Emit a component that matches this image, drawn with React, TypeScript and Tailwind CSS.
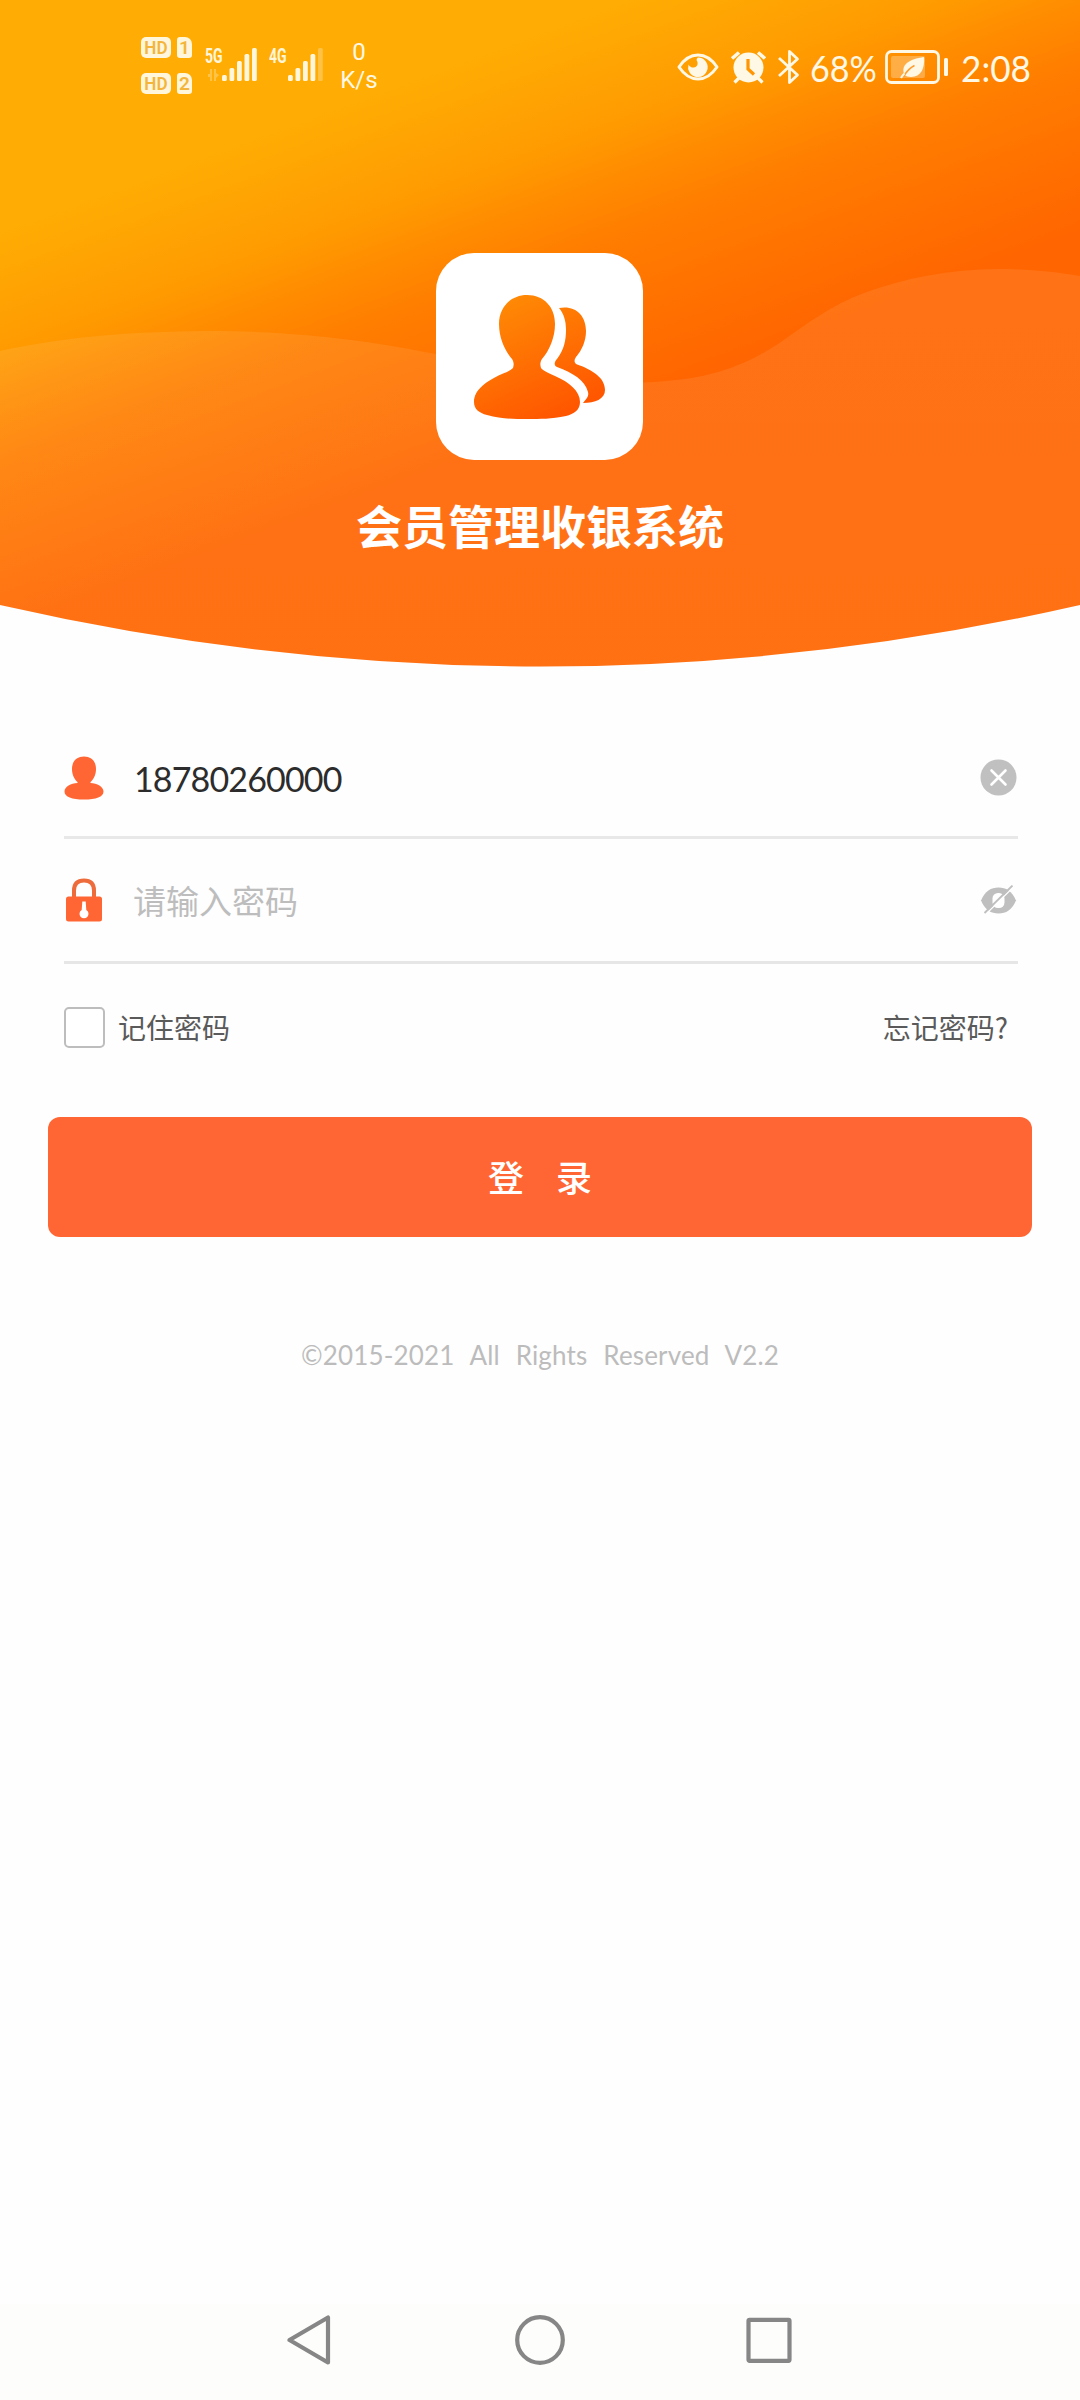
import { useState } from "react"
import { clsx } from "clsx"

const fontStack = "font-['Noto_Sans_CJK_SC','Noto_Sans',sans-serif]"
const latinStack = "font-['Lato','Noto_Sans_CJK_SC',sans-serif]"

function HeaderBackground() {
  return (
    <svg className="absolute inset-0" width="1080" height="668" viewBox="0 0 1080 668" aria-hidden="true">
      <defs>
        <linearGradient id="sky" gradientUnits="userSpaceOnUse" x1="74" y1="198" x2="206" y2="555">
          <stop offset="0" stopColor="#ffad04" />
          <stop offset="0.31" stopColor="#ff9b01" />
          <stop offset="0.44" stopColor="#ff8c00" />
          <stop offset="0.59" stopColor="#ff7d00" />
          <stop offset="1" stopColor="#ff6500" />
        </linearGradient>
        <linearGradient id="wave" x1="0" y1="0" x2="0" y2="1">
          <stop offset="0" stopColor="#fff" stopOpacity="0.085" />
          <stop offset="1" stopColor="#fff" stopOpacity="0.075" />
        </linearGradient>
        <clipPath id="bowl">
          <path d="M0 0H1080V605Q540 728 0 605Z" />
        </clipPath>
      </defs>
      <g clipPath="url(#bowl)">
        <rect width="1080" height="668" fill="url(#sky)" />
        <path
          d="M0 351C70 336 130 332 207 331C300 331 370 341 436 354C510 370 590 386 654 382C700 379 735 372 778 344C810 322 830 306 864 293C905 278 950 269 999 269C1030 269 1055 272 1080 276V668H0Z"
          fill="url(#wave)"
        />
      </g>
    </svg>
  )
}

function HdBadge({ sim }: { sim: string }) {
  return (
    <div className="flex h-[21px] gap-[6px] font-['Roboto',sans-serif] text-[19px] leading-[22px] font-semibold text-[#f3b53c]">
      <span className="flex w-[30px] justify-center rounded-[5px] bg-[#fff6dc]">
        <span className="scale-x-[0.9]">HD</span>
      </span>
      <span className="w-[15px] rounded-[3px] rounded-tr-[7px] bg-[#fff6dc] text-center">{sim}</span>
    </div>
  )
}

const barTops = [27, 20, 13, 6, 0]

function Signal({ label, faded }: { label: string; faded?: boolean }) {
  return (
    <div className="flex h-[33px] items-start text-[#fff6dc]">
      <span className="w-[17px] origin-left scale-x-[0.7] font-['Roboto',sans-serif] text-[20px] leading-[16px] font-bold">
        {label}
      </span>
      <svg className={faded ? "ml-[2px]" : "ml-0"} width="36" height="33" viewBox="0 0 36 33" fill="currentColor">
        {barTops.map((top, i) => (
          <rect
            key={top}
            x={i * 7.5}
            y={top}
            width="4.8"
            height={33 - top}
            rx="1.6"
            opacity={faded && i === 4 ? 0.3 : 1}
          />
        ))}
      </svg>
    </div>
  )
}

function EyeIcon() {
  return (
    <svg width="42" height="28" viewBox="0 0 42 28" fill="none">
      <path d="M2 14C8 5 14 2 21 2s13 3 19 12c-6 9-12 12-19 12S8 23 2 14Z" stroke="currentColor" strokeWidth="3" strokeLinejoin="round" />
      <path d="M21 4.500a9.800 9.800 0 1 1-9.500 7c1.200 2.300 3.200 3.300 5.300 3.100 3.400-.3 4.700-3.800 3.200-6.500-.7-1.200-.4-2.600 1-3.600Z" fill="currentColor" />
    </svg>
  )
}

function AlarmIcon() {
  return (
    <svg width="37" height="34" viewBox="0 0 37 34" fill="none">
      <circle cx="18.500" cy="17.500" r="15" fill="currentColor" />
      <path d="M2 8.500 9 2.500M35 8.500 28 2.500" stroke="currentColor" strokeWidth="3.600" />
      <path d="m9 28-4.500 4.500M28 28l4.500 4.500" stroke="currentColor" strokeWidth="3.200" />
      <path d="M18 9v10l6 5.500" stroke="#ff9503" strokeWidth="3.200" />
    </svg>
  )
}

function BluetoothIcon() {
  return (
    <svg width="24" height="36" viewBox="0 0 24 36" fill="none">
      <path d="M2 9 20.500 26 12.500 33.500V2.500L20.500 10 2 27" stroke="currentColor" strokeWidth="2.800" strokeLinejoin="round" />
    </svg>
  )
}

function BatteryIcon() {
  return (
    <svg width="64" height="34" viewBox="0 0 64 34" fill="none">
      <rect x="1.500" y="1.500" width="52" height="31" rx="5" stroke="currentColor" strokeWidth="2.800" />
      <rect x="6" y="6" width="34" height="22" rx="2" fill="currentColor" opacity="0.3" />
      <path d="M39 7c1 11-3 20-13 20-3 0-5-.8-6.500-2C15 15 24 9 39 7Z" fill="currentColor" />
      <path d="M18.500 26.500c3-5 6-8.500 11-11" stroke="#ff9d30" strokeWidth="1.600" />
      <path d="M16 28c1-2 2-3.200 3.500-4.500" stroke="currentColor" strokeWidth="2" />
      <rect x="59" y="8" width="4" height="18" rx="1.500" fill="currentColor" />
    </svg>
  )
}

function StatusBar() {
  return (
    <div className="relative flex h-[132px] justify-between pt-[37px] pr-[48px] pl-[141px] text-[#fff8e4]">
      <div className="flex items-start">
        <div className="flex flex-col gap-[15px]">
          <HdBadge sim="1" />
          <HdBadge sim="2" />
        </div>
        <div className="mt-[11px] ml-[13px] flex gap-[11px]">
          <div className="relative">
            <Signal label="5G" />
            <svg className="absolute bottom-0 left-[3px] opacity-30" width="11" height="12" viewBox="0 0 11 12" fill="currentColor">
              <path d="M0 5h2V0h2v12H2V8H0ZM6 0h2v4l3 2-3 3v3H6Z" />
            </svg>
          </div>
          <Signal label="4G" faded />
        </div>
        <div className="mt-[1px] ml-[13px] w-[44px] text-center font-['Roboto',sans-serif] text-[24px] leading-[28px]">
          <p>0</p>
          <p>K/s</p>
        </div>
      </div>
      <div className="flex h-[60px] items-center">
        <EyeIcon />
        <div className="ml-[11px] flex">
          <AlarmIcon />
        </div>
        <div className="ml-[10px] flex">
          <BluetoothIcon />
        </div>
        <span className={clsx("ml-[9px] w-[75px] origin-left scale-x-[0.92] text-[37px] leading-none whitespace-nowrap", latinStack)}>
          68%
        </span>
        <BatteryIcon />
        <span className={clsx("ml-[12px] w-[71px] origin-left scale-x-[0.95] text-[37px] leading-none", latinStack)}>2:08</span>
      </div>
    </div>
  )
}

function Logo() {
  return (
    <div className="relative mt-[121px] ml-[436px] h-[207px] w-[207px] rounded-[38px] bg-white">
      <svg width="207" height="207" viewBox="0 0 207 207" fill="none">
        <defs>
          <linearGradient id="members" gradientUnits="userSpaceOnUse" x1="70" y1="45" x2="125" y2="165">
            <stop offset="0" stopColor="#ff8a05" />
            <stop offset="1" stopColor="#ff5500" />
          </linearGradient>
        </defs>
        <g fill="url(#members)">
          <path d="M91 42C108 42 119 54 119 71C119 85 113 98 106 106C104 109 104 112 105 115C107 118 113 120 119 123C133 129 144 138 144 149C144 157 138 161 130 163C115 166 105 166 91 166C77 166 65 166 51 162C43 160 38 156 38 149C38 137 50 128 66 121C71 119 75 117 77 115C78 112 78 109 76 106C69 98 63 85 63 71C63 54 75 42 91 42Z" />
          <path d="M123 55C139 52 150 62 150 78C150 88 146 97 140 104C138 107 138 109 140 111C157 117 169 125 169 137C169 146 159 150 147 150C151 145 153 143 152 139C149 127 137 120 121 114C117 112 119 108 121 106C128 97 130 87 130 77C130 68 128 61 123 55Z" />
        </g>
      </svg>
    </div>
  )
}

function UserIcon() {
  return (
    <svg className="mt-[3px]" width="40" height="44" viewBox="0 0 40 44" fill="#ff6633">
      <path d="M20 0.500C27.500 0.500 32 5.500 32 13C32 19 29.500 23.500 26.500 26V27C33 27.500 39.500 30.500 39.500 35.500C39.500 41 32 43.500 20 43.500S0.500 41 0.500 35.500C0.500 30.500 7 27.500 13.500 27V26C10.500 23.500 8 19 8 13C8 5.500 12.500 0.500 20 0.500Z" />
    </svg>
  )
}

function LockIcon() {
  return (
    <svg width="40" height="44" viewBox="0 0 40 44" fill="none">
      <path d="M10 20V12.500C10 6 13.500 2.500 20 2.500S30 6 30 12.500V20" stroke="#ee6c3c" strokeWidth="4" />
      <rect x="2" y="18.500" width="36" height="25" rx="2.500" fill="#ff6633" />
      <path d="M18.300 23.500h3.400l.6 8.500a4.500 4.500 0 1 1-4.600 0Z" fill="#fff" />
    </svg>
  )
}

function ClearIcon() {
  return (
    <svg width="37" height="37" viewBox="0 0 37 37" fill="none">
      <circle cx="18.500" cy="18.500" r="18" fill="#c0c0c0" />
      <path d="m11.500 11.500 14 14M25.500 11.500l-14 14" stroke="#fff" strokeWidth="2.600" strokeLinecap="round" />
    </svg>
  )
}

function HiddenIcon() {
  return (
    <svg width="37" height="30" viewBox="0 0 37 30" fill="none">
      <path d="M1 15.500C5 6 11 2.500 18.500 2.500S32 6 36 15.500C32 25 26 28.500 18.500 28.500S5 25 1 15.500Z" fill="#bfbfbf" />
      <rect x="12.500" y="8" width="12" height="15" rx="5.500" fill="#fff" />
      <path d="M6.500 28.500 33 2.500" stroke="#fff" strokeWidth="1.200" />
      <path d="M4.500 28 32.500 0.500" stroke="#bfbfbf" strokeWidth="1.800" />
    </svg>
  )
}

export default function App() {
  const [phone, setPhone] = useState("18780260000")
  const [password, setPassword] = useState("")
  const [visible, setVisible] = useState(false)
  const [remember, setRemember] = useState(false)

  return (
    <div className={clsx("flex h-[2400px] w-[1080px] flex-col bg-[#fefefe]", fontStack)}>
      <header className="relative h-[668px]">
        <HeaderBackground />
        <StatusBar />
        <Logo />
        <h1 className="relative mt-[29px] text-center text-[46px] leading-[70px] font-bold text-white">会员管理收银系统</h1>
      </header>

      <form className="flex flex-col" onSubmit={(event) => event.preventDefault()}>
        <div className="mt-[48px] mr-[62px] ml-[64px] flex h-[123px] items-center border-b-[3px] border-[#e8e8e8]">
          <UserIcon />
          <input
            type="text"
            value={phone}
            onChange={(event) => setPhone(event.target.value)}
            className={clsx(
              "ml-[30px] h-[60px] min-w-0 flex-1 pt-[5px] text-[34px] tracking-[-0.85px] text-[#2c2c2c] outline-none",
              latinStack,
            )}
          />
          <button type="button" className="mt-[2px] mr-[1px]" onClick={() => setPhone("")}>
            <ClearIcon />
          </button>
        </div>
        <div className="mr-[62px] ml-[64px] flex h-[125px] items-center border-b-[3px] border-[#e6e6e6]">
          <LockIcon />
          <input
            type={visible ? "text" : "password"}
            value={password}
            placeholder="请输入密码"
            onChange={(event) => setPassword(event.target.value)}
            className="ml-[29px] h-[60px] min-w-0 flex-1 text-[33px] text-[#2c2c2c] outline-none placeholder:text-[#bdbdbd]"
          />
          <button type="button" className="mr-[1px]" onClick={() => setVisible(!visible)}>
            <HiddenIcon />
          </button>
        </div>

        <div className="mt-[43px] mr-[72px] ml-[64px] flex h-[41px] items-center justify-between text-[28px] text-[#5a5a5a]">
          <button type="button" onClick={() => setRemember(!remember)} className="flex items-center">
            <span
              className={clsx(
                "h-[41px] w-[41px] rounded-[5px] border-[2.500px] border-[#bdbdbd]",
                remember ? "bg-[#ff6633]" : "bg-white",
              )}
            />
            <span className="ml-[13px] pb-[2px]">记住密码</span>
          </button>
          <a className="pb-[2px]">忘记密码?</a>
        </div>

        <button
          type="submit"
          className="mx-[48px] mt-[69px] h-[120px] rounded-[12px] bg-[#ff6633] pb-[3px] text-[36px] font-medium text-white"
        >
          <span className="flex justify-center gap-[32px]">
            <span>登</span>
            <span>录</span>
          </span>
        </button>
      </form>

      <p
        className={clsx(
          "mt-[98px] text-center text-[26px] leading-[40px] tracking-[0.17px] text-[#bcbcbc] [word-spacing:9px]",
          latinStack,
        )}
      >
        ©2015-2021 All Rights Reserved V2.2
      </p>

      <nav className="mt-auto flex h-[96px] items-start justify-center gap-[180px] bg-[#fdfdfb] pt-[11px]">
        <svg width="50" height="50" viewBox="0 0 50 50" fill="none" stroke="#868686" strokeWidth="4.200" strokeLinejoin="round">
          <path d="M43 2.500V47.500L4.500 25Z" />
        </svg>
        <svg width="50" height="50" viewBox="0 0 50 50" fill="none" stroke="#868686" strokeWidth="4.200">
          <circle cx="25" cy="25" r="22.800" />
        </svg>
        <svg width="50" height="50" viewBox="0 0 50 50" fill="none" stroke="#868686" strokeWidth="4.200" strokeLinejoin="round">
          <rect x="3.500" y="4.800" width="41" height="41" rx="1" />
        </svg>
      </nav>
    </div>
  )
}
